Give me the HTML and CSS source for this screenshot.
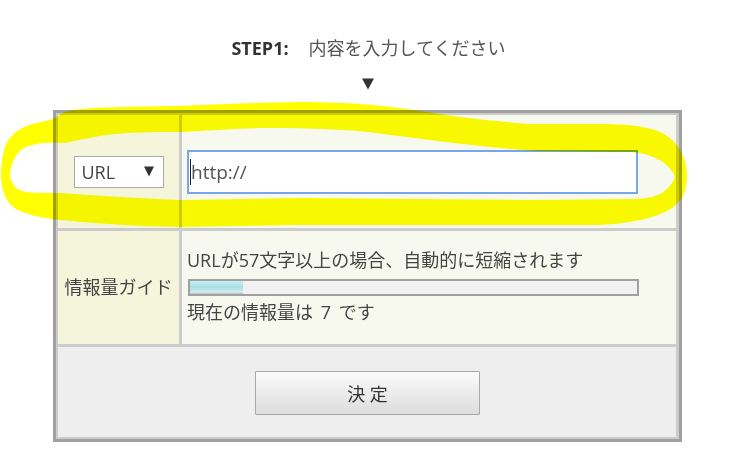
FILE: index.html
```html
<!DOCTYPE html>
<html lang="ja">
<head>
<meta charset="utf-8">
<title>STEP1</title>
<link rel="stylesheet" href="styles.css">
</head>
<body>
<div class="page">
  <div class="step"><span class="step-label">STEP1:</span><span>内容を入力してください</span></div>
  <div class="down"><svg width="12" height="12" viewBox="0 0 12 12"><polygon points="0,0.5 12,0.5 6,11.5" fill="#333"/></svg></div>
  <div class="form">
    <div class="cell head">
      <div class="select"><span>URL</span><svg width="10" height="11" viewBox="0 0 10 11"><polygon points="0,0.5 10,0.5 5,10.5" fill="#333"/></svg></div>
    </div>
    <div class="cell body">
      <div class="field"><span class="caret"></span><span>http://</span></div>
    </div>
    <div class="cell head"><span class="head-label">情報量ガイド</span></div>
    <div class="cell body guide">
      <div class="line">URLが57文字以上の場合、自動的に短縮されます</div>
      <div class="bar"><div class="bar-fill" style="width:53px"></div></div>
      <div class="line spaced">現在の情報量は 7 です</div>
    </div>
    <div class="cell foot"><div class="button">決 定</div></div>
  </div>
  <svg class="marker" width="729" height="466" viewBox="0 0 729 466">
    <path fill-rule="evenodd" fill="#ffff00" d="M1,177 C1,160 4,146 9,139 C15,131 24,126 36,123 C46,121 54,120 61,114 C68,109 90,108 120,107 L180,106 C220,104 250,103 300,102 C350,102 390,106 420,111 C450,116 480,120 530,124 L600,124 C625,124 642,126 655,130 C668,134 678,143 684,158 C688,170 688,186 683,196 C678,205 668,212 655,216 C640,221 620,224 600,225 L530,225 L300,225 L180,227 C130,226 90,223 60,220 C42,218 28,215 18,210 C8,205 2,195 1,177 Z M10,173 C12,160 17,152 24,148 C32,144 42,142 65,143 C80,140 95,136 115,134 C140,132 160,132 180,132 C220,130 245,128 270,128 C320,128 360,130 390,135 C430,140 460,144 490,147 C510,149 520,150 540,151 L630,152 C645,153 656,157 664,163 C670,168 674,173 675,177 C672,185 666,191 658,195 C650,198 642,199 630,199 L530,200 L300,198 L180,200 C130,198 90,195 60,193 C40,193 30,193 22,191 C14,188 10,182 10,173 Z"/>
  </svg>
</div>
</body>
</html>
```
FILE: styles.css
```css
html, body {
  margin: 0;
  padding: 0;
  background: #fff;
}
body {
  font-family: "Open Sans", "Noto Sans CJK JP", sans-serif;
  color: #444;
  font-size: 18px;
}
.page {
  position: relative;
  width: 729px;
  height: 466px;
  overflow: hidden;
}
.step {
  padding-top: 36px;
  padding-left: 8px;
  display: flex;
  justify-content: center;
  gap: 20px;
  line-height: 24px;
  font-size: 18px;
  color: #555;
}
.step-label {
  font-weight: 700;
  color: #333;
}
.down {
  margin-top: 18px;
  display: flex;
  justify-content: center;
  padding-left: 7px;
  height: 12px;
}
.down svg { display: block; }
.form {
  margin: 20px 0 0 53px;
  width: 619px;
  border: 3px solid #a0a0a0;
  padding: 2px;
  background: #cccccc;
  display: grid;
  grid-template-columns: 121px 494px;
  grid-template-rows: 113px 113px 90px;
  column-gap: 3px;
  row-gap: 3px;
}
.cell {
  display: flex;
  align-items: center;
}
.head {
  background: #f5f5dc;
  justify-content: center;
}
.head-label {
  margin-top: -3px;
}
.body {
  background: #f8f9ee;
  padding-left: 5px;
}
.foot {
  grid-column: 1 / 3;
  background: #eeeeee;
  justify-content: center;
  padding-left: 1px;
}
.select {
  width: 90px;
  height: 32px;
  box-sizing: border-box;
  border: 1px solid #aaa;
  background: #fff;
  display: flex;
  align-items: center;
  justify-content: space-between;
  padding: 0 9px 0 7px;
  font-size: 18px;
  color: #444;
}
.select svg { display: block; }
.field {
  width: 451px;
  height: 44px;
  box-sizing: border-box;
  border: 2px solid #79a6ea;
  background: #fff;
  display: flex;
  align-items: center;
  padding-left: 1px;
  font-size: 19px;
  color: #555;
  margin-top: 1px;
}
.caret {
  display: block;
  width: 1px;
  height: 26px;
  background: #222;
}
.guide {
  flex-direction: column;
  align-items: flex-start;
  justify-content: center;
  padding-bottom: 3px;
}
.line {
  line-height: 24px;
  color: #444;
}
.spaced {
  word-spacing: 3px;
}
.bar {
  width: 451px;
  height: 17px;
  box-sizing: border-box;
  border: 2px solid #a0a0a0;
  background: #f1f1f1;
  margin: 7px 0 4px 1px;
}
.bar-fill {
  height: 100%;
  background: linear-gradient(#c6f0f4 0%, #a9dfe6 45%, #b9e6ea 70%, #d9eff1 85%, #bcbcbc 100%);
}
.button {
  width: 225px;
  height: 44px;
  box-sizing: border-box;
  border: 1px solid #a9a9a9;
  border-radius: 1px;
  background: linear-gradient(#fbfbfb, #dddddd);
  display: flex;
  align-items: center;
  justify-content: center;
  font-size: 18px;
  color: #333;
  margin-top: 2px;
}
.marker {
  position: absolute;
  left: 0;
  top: 0;
  pointer-events: none;
  mix-blend-mode: multiply;
}
```
